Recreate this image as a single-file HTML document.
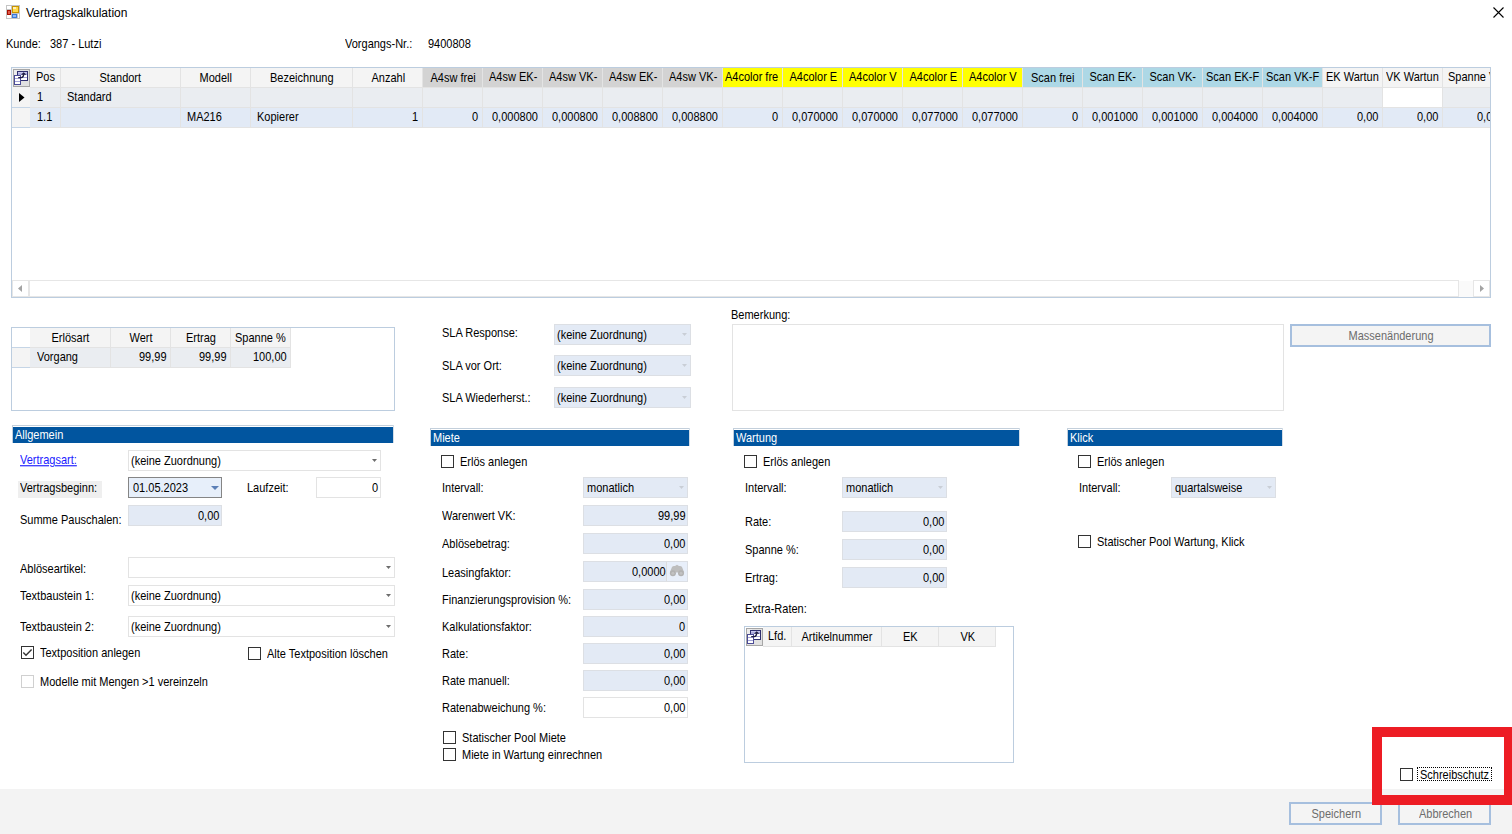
<!DOCTYPE html><html><head><meta charset="utf-8"><style>
html,body{margin:0;padding:0;width:1512px;height:834px;overflow:hidden;background:#fff;position:relative}
.b{position:absolute}
.t{position:absolute;font-family:"Liberation Sans", sans-serif;font-size:11px;line-height:13px;white-space:pre;color:#000;transform:scaleY(1.125);transform-origin:0 9.5px}
</style></head><body>
<svg class="b" style="left:6px;top:5px" width="14" height="14" viewBox="0 0 14 14" shape-rendering="crispEdges"><rect x="0" y="0" width="14" height="14" fill="#c4c4c4"/><rect x="1" y="1" width="4" height="3" fill="#fff"/><rect x="1" y="10" width="2" height="3" fill="#fff"/><rect x="3" y="10" width="2" height="3" fill="#fff"/><rect x="12" y="9" width="1" height="4" fill="#fff"/><rect x="1" y="5" width="4" height="5" fill="#a81000"/><rect x="2" y="6" width="2" height="3" fill="#e05848"/><rect x="6" y="1" width="7" height="7" fill="#c89400"/><rect x="7" y="2" width="5" height="5" fill="#ffd84a"/><rect x="7" y="2" width="3" height="2" fill="#fff0b8"/><rect x="6" y="9" width="5" height="4" fill="#3a78d8"/><rect x="7" y="10" width="3" height="2" fill="#90b8f8"/></svg>
<svg class="b" style="left:1492px;top:6px" width="13" height="13" viewBox="0 0 13 13"><path d="M1.5 1.5L11.5 11.5M11.5 1.5L1.5 11.5" stroke="#000" stroke-width="1.1"/></svg>
<div class="b" style="left:11px;top:67px;width:1480px;height:231px;background:#fff;box-sizing:border-box;border:1px solid #bccddf;"></div>
<div class="b" style="left:12px;top:68px;width:18px;height:20px;background:#f4f4f4;"></div>
<div class="b" style="left:12px;top:88px;width:18px;height:19px;background:#f4f4f4;"></div>
<div class="b" style="left:12px;top:107px;width:18px;height:1px;background:#c5d5e6;"></div>
<div class="b" style="left:12px;top:108px;width:18px;height:19px;background:#f4f4f4;"></div>
<div class="b" style="left:12px;top:127px;width:18px;height:1px;background:#c5d5e6;"></div>
<svg class="b" style="left:12px;top:68px" width="19" height="20" viewBox="0 0 19 20" shape-rendering="crispEdges"><rect x="1.5" y="1.5" width="16" height="17" fill="#e1e1e1" stroke="#a6a6a6"/><rect x="2" y="2" width="5" height="5" fill="#ececec"/><rect x="5.5" y="3.5" width="10" height="9" fill="#fff" stroke="#2e2e6e"/><rect x="6" y="4" width="9" height="3" fill="#ababdd"/><rect x="6" y="4" width="9" height="1" fill="#c8c8ee"/><rect x="6" y="9" width="9" height="1" fill="#a4a4d8"/><rect x="2.5" y="7.5" width="6" height="9" fill="#fff" stroke="#4b4b96"/><rect x="3" y="10" width="5" height="1" fill="#a4a4d8"/><rect x="3" y="13" width="5" height="1" fill="#a4a4d8"/></svg><svg class="b" style="left:12px;top:68px" width="19" height="20" viewBox="0 0 19 20"><path d="M6.2 9.6H9.3C10.9 9.6 11.5 8.8 11.7 6.3" stroke="#1c1c40" stroke-width="1.3" fill="none"/><path d="M9 6.8L11.7 4.2L14.4 6.8Z" fill="#1c1c40"/></svg>
<svg class="b" style="left:19px;top:93px" width="6" height="10" viewBox="0 0 6 10"><path d="M0 0L5.5 4.5L0 9Z" fill="#000"/></svg>
<div class="b" style="left:30px;top:68px;width:31px;height:19px;background:#f4f4f4;"></div>
<div class="b" style="left:30px;top:88px;width:31px;height:19px;background:#eaedf1;"></div>
<div class="b" style="left:30px;top:108px;width:31px;height:19px;background:#e2eaf6;"></div>
<div class="b" style="left:60px;top:68px;width:121px;height:19px;background:#f4f4f4;"></div>
<div class="b" style="left:60px;top:88px;width:121px;height:19px;background:#eaedf1;"></div>
<div class="b" style="left:60px;top:108px;width:121px;height:19px;background:#e2eaf6;"></div>
<div class="b" style="left:180px;top:68px;width:71px;height:19px;background:#f4f4f4;"></div>
<div class="b" style="left:180px;top:88px;width:71px;height:19px;background:#eaedf1;"></div>
<div class="b" style="left:180px;top:108px;width:71px;height:19px;background:#e2eaf6;"></div>
<div class="b" style="left:250px;top:68px;width:103px;height:19px;background:#f4f4f4;"></div>
<div class="b" style="left:250px;top:88px;width:103px;height:19px;background:#eaedf1;"></div>
<div class="b" style="left:250px;top:108px;width:103px;height:19px;background:#e2eaf6;"></div>
<div class="b" style="left:352px;top:68px;width:71px;height:19px;background:#f4f4f4;"></div>
<div class="b" style="left:352px;top:88px;width:71px;height:19px;background:#eaedf1;"></div>
<div class="b" style="left:352px;top:108px;width:71px;height:19px;background:#e2eaf6;"></div>
<div class="b" style="left:422px;top:68px;width:61px;height:19px;background:#d3d3d3;"></div>
<div class="b" style="left:422px;top:88px;width:61px;height:19px;background:#eaedf1;"></div>
<div class="b" style="left:422px;top:108px;width:61px;height:19px;background:#e2eaf6;"></div>
<div class="b" style="left:482px;top:68px;width:61px;height:19px;background:#d3d3d3;"></div>
<div class="b" style="left:482px;top:88px;width:61px;height:19px;background:#eaedf1;"></div>
<div class="b" style="left:482px;top:108px;width:61px;height:19px;background:#e2eaf6;"></div>
<div class="b" style="left:542px;top:68px;width:61px;height:19px;background:#d3d3d3;"></div>
<div class="b" style="left:542px;top:88px;width:61px;height:19px;background:#eaedf1;"></div>
<div class="b" style="left:542px;top:108px;width:61px;height:19px;background:#e2eaf6;"></div>
<div class="b" style="left:602px;top:68px;width:61px;height:19px;background:#d3d3d3;"></div>
<div class="b" style="left:602px;top:88px;width:61px;height:19px;background:#eaedf1;"></div>
<div class="b" style="left:602px;top:108px;width:61px;height:19px;background:#e2eaf6;"></div>
<div class="b" style="left:662px;top:68px;width:61px;height:19px;background:#d3d3d3;"></div>
<div class="b" style="left:662px;top:88px;width:61px;height:19px;background:#eaedf1;"></div>
<div class="b" style="left:662px;top:108px;width:61px;height:19px;background:#e2eaf6;"></div>
<div class="b" style="left:722px;top:68px;width:61px;height:19px;background:#ffff00;"></div>
<div class="b" style="left:722px;top:88px;width:61px;height:19px;background:#eaedf1;"></div>
<div class="b" style="left:722px;top:108px;width:61px;height:19px;background:#e2eaf6;"></div>
<div class="b" style="left:782px;top:68px;width:61px;height:19px;background:#ffff00;"></div>
<div class="b" style="left:782px;top:88px;width:61px;height:19px;background:#eaedf1;"></div>
<div class="b" style="left:782px;top:108px;width:61px;height:19px;background:#e2eaf6;"></div>
<div class="b" style="left:842px;top:68px;width:61px;height:19px;background:#ffff00;"></div>
<div class="b" style="left:842px;top:88px;width:61px;height:19px;background:#eaedf1;"></div>
<div class="b" style="left:842px;top:108px;width:61px;height:19px;background:#e2eaf6;"></div>
<div class="b" style="left:902px;top:68px;width:61px;height:19px;background:#ffff00;"></div>
<div class="b" style="left:902px;top:88px;width:61px;height:19px;background:#eaedf1;"></div>
<div class="b" style="left:902px;top:108px;width:61px;height:19px;background:#e2eaf6;"></div>
<div class="b" style="left:962px;top:68px;width:61px;height:19px;background:#ffff00;"></div>
<div class="b" style="left:962px;top:88px;width:61px;height:19px;background:#eaedf1;"></div>
<div class="b" style="left:962px;top:108px;width:61px;height:19px;background:#e2eaf6;"></div>
<div class="b" style="left:1022px;top:68px;width:61px;height:19px;background:#add8e6;"></div>
<div class="b" style="left:1022px;top:88px;width:61px;height:19px;background:#eaedf1;"></div>
<div class="b" style="left:1022px;top:108px;width:61px;height:19px;background:#e2eaf6;"></div>
<div class="b" style="left:1082px;top:68px;width:61px;height:19px;background:#add8e6;"></div>
<div class="b" style="left:1082px;top:88px;width:61px;height:19px;background:#eaedf1;"></div>
<div class="b" style="left:1082px;top:108px;width:61px;height:19px;background:#e2eaf6;"></div>
<div class="b" style="left:1142px;top:68px;width:61px;height:19px;background:#add8e6;"></div>
<div class="b" style="left:1142px;top:88px;width:61px;height:19px;background:#eaedf1;"></div>
<div class="b" style="left:1142px;top:108px;width:61px;height:19px;background:#e2eaf6;"></div>
<div class="b" style="left:1202px;top:68px;width:61px;height:19px;background:#add8e6;"></div>
<div class="b" style="left:1202px;top:88px;width:61px;height:19px;background:#eaedf1;"></div>
<div class="b" style="left:1202px;top:108px;width:61px;height:19px;background:#e2eaf6;"></div>
<div class="b" style="left:1262px;top:68px;width:61px;height:19px;background:#add8e6;"></div>
<div class="b" style="left:1262px;top:88px;width:61px;height:19px;background:#eaedf1;"></div>
<div class="b" style="left:1262px;top:108px;width:61px;height:19px;background:#e2eaf6;"></div>
<div class="b" style="left:1322px;top:68px;width:61px;height:19px;background:#f4f4f4;"></div>
<div class="b" style="left:1322px;top:88px;width:61px;height:19px;background:#eaedf1;"></div>
<div class="b" style="left:1322px;top:108px;width:61px;height:19px;background:#e2eaf6;"></div>
<div class="b" style="left:1382px;top:68px;width:61px;height:19px;background:#f4f4f4;"></div>
<div class="b" style="left:1382px;top:88px;width:61px;height:19px;background:#fff;"></div>
<div class="b" style="left:1382px;top:108px;width:61px;height:19px;background:#e2eaf6;"></div>
<div class="b" style="left:1442px;top:68px;width:48px;height:19px;background:#f4f4f4;"></div>
<div class="b" style="left:1442px;top:88px;width:48px;height:19px;background:#eaedf1;"></div>
<div class="b" style="left:1442px;top:108px;width:48px;height:19px;background:#e2eaf6;"></div>
<div class="b" style="left:30px;top:87px;width:1460px;height:1px;background:#e3e3e3;"></div>
<div class="b" style="left:30px;top:107px;width:1460px;height:1px;background:#e3e3e3;"></div>
<div class="b" style="left:30px;top:127px;width:1460px;height:1px;background:#e3e3e3;"></div>
<div class="b" style="left:60px;top:68px;width:1px;height:60px;background:#e3e3e3;"></div>
<div class="b" style="left:180px;top:68px;width:1px;height:60px;background:#e3e3e3;"></div>
<div class="b" style="left:250px;top:68px;width:1px;height:60px;background:#e3e3e3;"></div>
<div class="b" style="left:352px;top:68px;width:1px;height:60px;background:#e3e3e3;"></div>
<div class="b" style="left:422px;top:68px;width:1px;height:60px;background:#e3e3e3;"></div>
<div class="b" style="left:482px;top:68px;width:1px;height:60px;background:#e3e3e3;"></div>
<div class="b" style="left:542px;top:68px;width:1px;height:60px;background:#e3e3e3;"></div>
<div class="b" style="left:602px;top:68px;width:1px;height:60px;background:#e3e3e3;"></div>
<div class="b" style="left:662px;top:68px;width:1px;height:60px;background:#e3e3e3;"></div>
<div class="b" style="left:722px;top:68px;width:1px;height:60px;background:#e3e3e3;"></div>
<div class="b" style="left:782px;top:68px;width:1px;height:60px;background:#e3e3e3;"></div>
<div class="b" style="left:842px;top:68px;width:1px;height:60px;background:#e3e3e3;"></div>
<div class="b" style="left:902px;top:68px;width:1px;height:60px;background:#e3e3e3;"></div>
<div class="b" style="left:962px;top:68px;width:1px;height:60px;background:#e3e3e3;"></div>
<div class="b" style="left:1022px;top:68px;width:1px;height:60px;background:#e3e3e3;"></div>
<div class="b" style="left:1082px;top:68px;width:1px;height:60px;background:#e3e3e3;"></div>
<div class="b" style="left:1142px;top:68px;width:1px;height:60px;background:#e3e3e3;"></div>
<div class="b" style="left:1202px;top:68px;width:1px;height:60px;background:#e3e3e3;"></div>
<div class="b" style="left:1262px;top:68px;width:1px;height:60px;background:#e3e3e3;"></div>
<div class="b" style="left:1322px;top:68px;width:1px;height:60px;background:#e3e3e3;"></div>
<div class="b" style="left:1382px;top:68px;width:1px;height:60px;background:#e3e3e3;"></div>
<div class="b" style="left:1442px;top:68px;width:1px;height:60px;background:#e3e3e3;"></div>
<div class="b" style="left:12px;top:280px;width:1478px;height:17px;background:#fff;"></div>
<div class="b" style="left:12px;top:280px;width:17px;height:17px;box-sizing:border-box;border:1px solid #e6e6e6;"></div>
<svg class="b" style="left:17px;top:284px" width="7" height="10" viewBox="0 0 7 10"><path d="M5 1L1 4.5L5 8Z" fill="#a3a3a3"/></svg>
<div class="b" style="left:29px;top:280px;width:1430px;height:17px;box-sizing:border-box;border:1px solid #e6e6e6;"></div>
<div class="b" style="left:1459px;top:281px;width:14px;height:16px;background:#fafafa;"></div>
<div class="b" style="left:1473px;top:280px;width:17px;height:17px;box-sizing:border-box;border:1px solid #e6e6e6;"></div>
<svg class="b" style="left:1479px;top:284px" width="7" height="10" viewBox="0 0 7 10"><path d="M1 1L5 4.5L1 8Z" fill="#a3a3a3"/></svg>
<div class="b" style="left:11px;top:327px;width:384px;height:84px;background:#fff;box-sizing:border-box;border:1px solid #bccddf;"></div>
<div class="b" style="left:12px;top:348px;width:18px;height:19px;background:#f4f4f4;"></div>
<div class="b" style="left:12px;top:367px;width:18px;height:1px;background:#c5d5e6;"></div>
<div class="b" style="left:12px;top:347px;width:18px;height:1px;background:#c5d5e6;"></div>
<div class="b" style="left:30px;top:328px;width:81px;height:19px;background:#f4f4f4;"></div>
<div class="b" style="left:30px;top:348px;width:81px;height:19px;background:#eaedf1;"></div>
<div class="b" style="left:110px;top:328px;width:61px;height:19px;background:#f4f4f4;"></div>
<div class="b" style="left:110px;top:348px;width:61px;height:19px;background:#eaedf1;"></div>
<div class="b" style="left:170px;top:328px;width:61px;height:19px;background:#f4f4f4;"></div>
<div class="b" style="left:170px;top:348px;width:61px;height:19px;background:#eaedf1;"></div>
<div class="b" style="left:230px;top:328px;width:61px;height:19px;background:#f4f4f4;"></div>
<div class="b" style="left:230px;top:348px;width:61px;height:19px;background:#eaedf1;"></div>
<div class="b" style="left:30px;top:347px;width:261px;height:1px;background:#e3e3e3;"></div>
<div class="b" style="left:30px;top:367px;width:261px;height:1px;background:#e3e3e3;"></div>
<div class="b" style="left:110px;top:328px;width:1px;height:40px;background:#e3e3e3;"></div>
<div class="b" style="left:170px;top:328px;width:1px;height:40px;background:#e3e3e3;"></div>
<div class="b" style="left:230px;top:328px;width:1px;height:40px;background:#e3e3e3;"></div>
<div class="b" style="left:290px;top:328px;width:1px;height:40px;background:#e3e3e3;"></div>
<div class="b" style="left:12px;top:425px;width:382px;height:1px;background:#c3cfdb;"></div>
<div class="b" style="left:12px;top:425px;width:1px;height:18px;background:#c3cfdb;"></div>
<div class="b" style="left:393px;top:425px;width:1px;height:18px;background:#d3dde7;"></div>
<div class="b" style="left:13px;top:427px;width:380px;height:16px;background:#01559f;"></div>
<div class="b" style="left:430px;top:428px;width:260px;height:1px;background:#c3cfdb;"></div>
<div class="b" style="left:430px;top:428px;width:1px;height:18px;background:#c3cfdb;"></div>
<div class="b" style="left:689px;top:428px;width:1px;height:18px;background:#d3dde7;"></div>
<div class="b" style="left:431px;top:430px;width:258px;height:16px;background:#01559f;"></div>
<div class="b" style="left:733px;top:428px;width:287px;height:1px;background:#c3cfdb;"></div>
<div class="b" style="left:733px;top:428px;width:1px;height:18px;background:#c3cfdb;"></div>
<div class="b" style="left:1019px;top:428px;width:1px;height:18px;background:#d3dde7;"></div>
<div class="b" style="left:734px;top:430px;width:285px;height:16px;background:#01559f;"></div>
<div class="b" style="left:1067px;top:428px;width:216px;height:1px;background:#c3cfdb;"></div>
<div class="b" style="left:1067px;top:428px;width:1px;height:18px;background:#c3cfdb;"></div>
<div class="b" style="left:1282px;top:428px;width:1px;height:18px;background:#d3dde7;"></div>
<div class="b" style="left:1068px;top:430px;width:214px;height:16px;background:#01559f;"></div>
<div class="t" style="left:20px;top:454px;color:#1a1aff;text-decoration:underline">Vertragsart:</div>
<div class="b" style="left:128px;top:450px;width:253px;height:21px;background:#fff;box-sizing:border-box;border:1px solid #e3e3e3;"></div>
<svg class="b" style="left:372px;top:459px" width="5" height="3" viewBox="0 0 5 3"><path d="M0 0H5L2.5 3Z" fill="#6d6d6d"/></svg>
<div class="b" style="left:18px;top:481px;width:84px;height:17px;background:#efefef;"></div>
<div class="b" style="left:128px;top:477px;width:94px;height:21px;background:#e7effa;box-sizing:border-box;border:1px solid #858585;"></div>
<svg class="b" style="left:211px;top:486px" width="8" height="4" viewBox="0 0 8 4"><path d="M0 0H8L4 4Z" fill="#5b7fb6"/></svg>
<div class="b" style="left:316px;top:477px;width:65px;height:21px;background:#fff;box-sizing:border-box;border:1px solid #e3e3e3;"></div>
<div class="b" style="left:128px;top:505px;width:94px;height:21px;background:#e3eaf5;box-sizing:border-box;border:1px solid #dcdfe4;"></div>
<div class="b" style="left:128px;top:557px;width:267px;height:21px;background:#fff;box-sizing:border-box;border:1px solid #e3e3e3;"></div>
<svg class="b" style="left:386px;top:566px" width="5" height="3" viewBox="0 0 5 3"><path d="M0 0H5L2.5 3Z" fill="#6d6d6d"/></svg>
<div class="b" style="left:128px;top:585px;width:267px;height:21px;background:#fff;box-sizing:border-box;border:1px solid #e3e3e3;"></div>
<svg class="b" style="left:386px;top:594px" width="5" height="3" viewBox="0 0 5 3"><path d="M0 0H5L2.5 3Z" fill="#6d6d6d"/></svg>
<div class="b" style="left:128px;top:616px;width:267px;height:21px;background:#fff;box-sizing:border-box;border:1px solid #e3e3e3;"></div>
<svg class="b" style="left:386px;top:625px" width="5" height="3" viewBox="0 0 5 3"><path d="M0 0H5L2.5 3Z" fill="#6d6d6d"/></svg>
<div class="b" style="left:21px;top:646px;width:13px;height:13px;box-sizing:border-box;border:1px solid #333;background:#fff"></div>
<svg class="b" style="left:21px;top:646px" width="13" height="13" viewBox="0 0 13 13"><path d="M2.3 6.6L5 9.2L10.6 3.6" stroke="#333" stroke-width="1.45" fill="none"/></svg>
<div class="b" style="left:248px;top:647px;width:13px;height:13px;box-sizing:border-box;border:1px solid #333;background:#fff"></div>
<div class="b" style="left:21px;top:675px;width:13px;height:13px;box-sizing:border-box;border:1px solid #d0d0d0;background:#fff"></div>
<div class="b" style="left:554px;top:324px;width:137px;height:21px;background:#e3eaf5;box-sizing:border-box;border:1px solid #dcdfe4;"></div>
<svg class="b" style="left:682px;top:333px" width="5" height="3" viewBox="0 0 5 3"><path d="M0 0H5L2.5 3Z" fill="#c9ced6"/></svg>
<div class="b" style="left:554px;top:355px;width:137px;height:21px;background:#e3eaf5;box-sizing:border-box;border:1px solid #dcdfe4;"></div>
<svg class="b" style="left:682px;top:364px" width="5" height="3" viewBox="0 0 5 3"><path d="M0 0H5L2.5 3Z" fill="#c9ced6"/></svg>
<div class="b" style="left:554px;top:387px;width:137px;height:21px;background:#e3eaf5;box-sizing:border-box;border:1px solid #dcdfe4;"></div>
<svg class="b" style="left:682px;top:396px" width="5" height="3" viewBox="0 0 5 3"><path d="M0 0H5L2.5 3Z" fill="#c9ced6"/></svg>
<div class="b" style="left:732px;top:324px;width:552px;height:87px;background:#fff;box-sizing:border-box;border:1px solid #e3e3e3;"></div>
<div class="b" style="left:1290px;top:324px;width:201px;height:23px;box-sizing:border-box;border:2px solid #a6bfde;background:#f4f4f4"></div>
<div class="b" style="left:441px;top:455px;width:13px;height:13px;box-sizing:border-box;border:1px solid #333;background:#fff"></div>
<div class="b" style="left:583px;top:477px;width:105px;height:21px;background:#e3eaf5;box-sizing:border-box;border:1px solid #dcdfe4;"></div>
<svg class="b" style="left:679px;top:486px" width="5" height="3" viewBox="0 0 5 3"><path d="M0 0H5L2.5 3Z" fill="#c9ced6"/></svg>
<div class="b" style="left:583px;top:505px;width:105px;height:21px;background:#e3eaf5;box-sizing:border-box;border:1px solid #dcdfe4;"></div>
<div class="b" style="left:583px;top:533px;width:105px;height:21px;background:#e3eaf5;box-sizing:border-box;border:1px solid #dcdfe4;"></div>
<div class="b" style="left:583px;top:561px;width:105px;height:21px;background:#e3eaf5;box-sizing:border-box;border:1px solid #dcdfe4;"></div>
<div class="b" style="left:666px;top:562px;width:1px;height:19px;background:#dcdcdc;"></div>
<div class="b" style="left:583px;top:589px;width:105px;height:21px;background:#e3eaf5;box-sizing:border-box;border:1px solid #dcdfe4;"></div>
<div class="b" style="left:583px;top:616px;width:105px;height:21px;background:#e3eaf5;box-sizing:border-box;border:1px solid #dcdfe4;"></div>
<div class="b" style="left:583px;top:643px;width:105px;height:21px;background:#e3eaf5;box-sizing:border-box;border:1px solid #dcdfe4;"></div>
<div class="b" style="left:583px;top:670px;width:105px;height:21px;background:#e3eaf5;box-sizing:border-box;border:1px solid #dcdfe4;"></div>
<div class="b" style="left:583px;top:697px;width:105px;height:21px;background:#fff;box-sizing:border-box;border:1px solid #e3e3e3;"></div>
<div class="b" style="left:667px;top:562px;width:20px;height:19px;background:#e8effa;"></div>
<svg class="b" style="left:668px;top:563px" width="18" height="14" viewBox="0 0 18 14"><path d="M1.8 9.5L4 4Q5 2.5 7 3L9 1.8L11 3Q13 2.5 14 4L16.2 9.5Z" fill="#bdbdbd"/><circle cx="4.9" cy="10.2" r="3" fill="#b2b2b2"/><circle cx="13" cy="10.2" r="3" fill="#b2b2b2"/><circle cx="4.9" cy="10.2" r="1.5" fill="#c2c2c2"/><circle cx="13" cy="10.2" r="1.5" fill="#c2c2c2"/></svg>
<div class="b" style="left:443px;top:731px;width:13px;height:13px;box-sizing:border-box;border:1px solid #333;background:#fff"></div>
<div class="b" style="left:443px;top:748px;width:13px;height:13px;box-sizing:border-box;border:1px solid #333;background:#fff"></div>
<div class="b" style="left:744px;top:455px;width:13px;height:13px;box-sizing:border-box;border:1px solid #333;background:#fff"></div>
<div class="b" style="left:842px;top:477px;width:105px;height:21px;background:#e3eaf5;box-sizing:border-box;border:1px solid #dcdfe4;"></div>
<svg class="b" style="left:938px;top:486px" width="5" height="3" viewBox="0 0 5 3"><path d="M0 0H5L2.5 3Z" fill="#c9ced6"/></svg>
<div class="b" style="left:842px;top:511px;width:105px;height:21px;background:#e3eaf5;box-sizing:border-box;border:1px solid #dcdfe4;"></div>
<div class="b" style="left:842px;top:539px;width:105px;height:21px;background:#e3eaf5;box-sizing:border-box;border:1px solid #dcdfe4;"></div>
<div class="b" style="left:842px;top:567px;width:105px;height:21px;background:#e3eaf5;box-sizing:border-box;border:1px solid #dcdfe4;"></div>
<div class="b" style="left:744px;top:626px;width:270px;height:137px;background:#fff;box-sizing:border-box;border:1px solid #bccddf;"></div>
<svg class="b" style="left:745px;top:627px" width="19" height="20" viewBox="0 0 19 20" shape-rendering="crispEdges"><rect x="1.5" y="1.5" width="16" height="17" fill="#e1e1e1" stroke="#a6a6a6"/><rect x="2" y="2" width="5" height="5" fill="#ececec"/><rect x="5.5" y="3.5" width="10" height="9" fill="#fff" stroke="#2e2e6e"/><rect x="6" y="4" width="9" height="3" fill="#ababdd"/><rect x="6" y="4" width="9" height="1" fill="#c8c8ee"/><rect x="6" y="9" width="9" height="1" fill="#a4a4d8"/><rect x="2.5" y="7.5" width="6" height="9" fill="#fff" stroke="#4b4b96"/><rect x="3" y="10" width="5" height="1" fill="#a4a4d8"/><rect x="3" y="13" width="5" height="1" fill="#a4a4d8"/></svg><svg class="b" style="left:745px;top:627px" width="19" height="20" viewBox="0 0 19 20"><path d="M6.2 9.6H9.3C10.9 9.6 11.5 8.8 11.7 6.3" stroke="#1c1c40" stroke-width="1.3" fill="none"/><path d="M9 6.8L11.7 4.2L14.4 6.8Z" fill="#1c1c40"/></svg>
<div class="b" style="left:763px;top:627px;width:29px;height:19px;background:#f4f4f4;"></div>
<div class="b" style="left:791px;top:627px;width:91px;height:19px;background:#f4f4f4;"></div>
<div class="b" style="left:881px;top:627px;width:58px;height:19px;background:#f4f4f4;"></div>
<div class="b" style="left:938px;top:627px;width:58px;height:19px;background:#f4f4f4;"></div>
<div class="b" style="left:763px;top:646px;width:233px;height:1px;background:#e3e3e3;"></div>
<div class="b" style="left:791px;top:627px;width:1px;height:19px;background:#e3e3e3;"></div>
<div class="b" style="left:881px;top:627px;width:1px;height:19px;background:#e3e3e3;"></div>
<div class="b" style="left:938px;top:627px;width:1px;height:19px;background:#e3e3e3;"></div>
<div class="b" style="left:995px;top:627px;width:1px;height:19px;background:#e3e3e3;"></div>
<div class="b" style="left:1078px;top:455px;width:13px;height:13px;box-sizing:border-box;border:1px solid #333;background:#fff"></div>
<div class="b" style="left:1171px;top:477px;width:105px;height:21px;background:#e3eaf5;box-sizing:border-box;border:1px solid #dcdfe4;"></div>
<svg class="b" style="left:1267px;top:486px" width="5" height="3" viewBox="0 0 5 3"><path d="M0 0H5L2.5 3Z" fill="#c9ced6"/></svg>
<div class="b" style="left:1078px;top:535px;width:13px;height:13px;box-sizing:border-box;border:1px solid #333;background:#fff"></div>
<div class="b" style="left:0px;top:789px;width:1512px;height:45px;background:#f3f3f3;"></div>
<div class="b" style="left:1289px;top:802px;width:93px;height:23px;box-sizing:border-box;border:2px solid #a6bfde;background:#f4f4f4"></div>
<div class="b" style="left:1398px;top:802px;width:93px;height:23px;box-sizing:border-box;border:2px solid #a6bfde;background:#f4f4f4"></div>
<div class="b" style="left:1400px;top:768px;width:13px;height:13px;box-sizing:border-box;border:1px solid #333;background:#fff"></div>
<div class="b" style="left:1417px;top:767px;width:75px;height:14px;box-sizing:border-box;border:1px dotted #000"></div>
<div class="b" style="left:1372px;top:727px;width:140px;height:78px;box-sizing:border-box;border:10px solid #ed1c24;border-right:8px solid #ed1c24"></div>
<div class="t" style="left:26.00px;top:7px;color:#000;font-size:12px;transform:none;">Vertragskalkulation</div>
<div class="t" style="left:6.00px;top:38px;color:#000;">Kunde:</div>
<div class="t" style="left:50.00px;top:38px;color:#000;">387 - Lutzi</div>
<div class="t" style="left:345.00px;top:38px;color:#000;">Vorgangs-Nr.:</div>
<div class="t" style="left:428.00px;top:38px;color:#000;">9400808</div>
<div class="t" style="left:36.00px;top:71px;color:#000;">Pos</div>
<div class="t" style="left:99.50px;top:72px;color:#000;">Standort</div>
<div class="t" style="left:199.50px;top:72px;color:#000;">Modell</div>
<div class="t" style="left:270.00px;top:72px;color:#000;">Bezeichnung</div>
<div class="t" style="left:371.50px;top:72px;color:#000;">Anzahl</div>
<div class="t" style="left:430.50px;top:72px;color:#000;">A4sw frei</div>
<div class="t" style="left:489.00px;top:71px;color:#000;">A4sw EK-</div>
<div class="t" style="left:549.00px;top:71px;color:#000;">A4sw VK-</div>
<div class="t" style="left:609.00px;top:71px;color:#000;">A4sw EK-</div>
<div class="t" style="left:669.00px;top:71px;color:#000;">A4sw VK-</div>
<div class="t" style="left:725.00px;top:71px;color:#000;">A4color fre</div>
<div class="t" style="left:789.50px;top:71px;color:#000;">A4color E</div>
<div class="t" style="left:849.00px;top:71px;color:#000;">A4color V</div>
<div class="t" style="left:909.50px;top:71px;color:#000;">A4color E</div>
<div class="t" style="left:969.00px;top:71px;color:#000;">A4color V</div>
<div class="t" style="left:1031.00px;top:72px;color:#000;">Scan frei</div>
<div class="t" style="left:1089.50px;top:71px;color:#000;">Scan EK-</div>
<div class="t" style="left:1149.50px;top:71px;color:#000;">Scan VK-</div>
<div class="t" style="left:1206.00px;top:71px;color:#000;">Scan EK-F</div>
<div class="t" style="left:1266.00px;top:71px;color:#000;">Scan VK-F</div>
<div class="t" style="left:1326.00px;top:71px;color:#000;">EK Wartun</div>
<div class="t" style="left:1386.00px;top:71px;color:#000;">VK Wartun</div>
<div class="b" style="left:1442px;top:69px;width:48px;height:18px;overflow:hidden"><div class="t" style="left:6.00px;top:2px;color:#000;">Spanne V</div></div>
<div class="t" style="left:37.00px;top:91px;color:#000;">1</div>
<div class="t" style="left:67.00px;top:91px;color:#000;">Standard</div>
<div class="t" style="left:37.00px;top:111px;color:#000;">1.1</div>
<div class="t" style="left:187.00px;top:111px;color:#000;">MA216</div>
<div class="t" style="left:257.00px;top:111px;color:#000;">Kopierer</div>
<div class="t" style="left:412.00px;top:111px;color:#000;">1</div>
<div class="t" style="left:472.00px;top:111px;color:#000;">0</div>
<div class="t" style="left:492.00px;top:111px;color:#000;">0,000800</div>
<div class="t" style="left:552.00px;top:111px;color:#000;">0,000800</div>
<div class="t" style="left:612.00px;top:111px;color:#000;">0,008800</div>
<div class="t" style="left:672.00px;top:111px;color:#000;">0,008800</div>
<div class="t" style="left:772.00px;top:111px;color:#000;">0</div>
<div class="t" style="left:792.00px;top:111px;color:#000;">0,070000</div>
<div class="t" style="left:852.00px;top:111px;color:#000;">0,070000</div>
<div class="t" style="left:912.00px;top:111px;color:#000;">0,077000</div>
<div class="t" style="left:972.00px;top:111px;color:#000;">0,077000</div>
<div class="t" style="left:1072.00px;top:111px;color:#000;">0</div>
<div class="t" style="left:1092.00px;top:111px;color:#000;">0,001000</div>
<div class="t" style="left:1152.00px;top:111px;color:#000;">0,001000</div>
<div class="t" style="left:1212.00px;top:111px;color:#000;">0,004000</div>
<div class="t" style="left:1272.00px;top:111px;color:#000;">0,004000</div>
<div class="t" style="left:1357.00px;top:111px;color:#000;">0,00</div>
<div class="t" style="left:1417.00px;top:111px;color:#000;">0,00</div>
<div class="b" style="left:1442px;top:109px;width:48px;height:18px;overflow:hidden"><div class="t" style="left:35.00px;top:2px;color:#000;">0,00</div></div>
<div class="t" style="left:51.50px;top:332px;color:#000;">Erlösart</div>
<div class="t" style="left:129.50px;top:332px;color:#000;">Wert</div>
<div class="t" style="left:186.00px;top:332px;color:#000;">Ertrag</div>
<div class="t" style="left:235.00px;top:332px;color:#000;">Spanne %</div>
<div class="t" style="left:37.00px;top:351px;color:#000;">Vorgang</div>
<div class="t" style="left:139.00px;top:351px;color:#000;">99,99</div>
<div class="t" style="left:199.00px;top:351px;color:#000;">99,99</div>
<div class="t" style="left:253.00px;top:351px;color:#000;">100,00</div>
<div class="t" style="left:15.00px;top:429px;color:#fff;">Allgemein</div>
<div class="t" style="left:433.00px;top:432px;color:#fff;">Miete</div>
<div class="t" style="left:736.00px;top:432px;color:#fff;">Wartung</div>
<div class="t" style="left:1070.00px;top:432px;color:#fff;">Klick</div>
<div class="t" style="left:131.00px;top:455px;color:#000;">(keine Zuordnung)</div>
<div class="t" style="left:20.00px;top:482px;color:#000;">Vertragsbeginn:</div>
<div class="t" style="left:133.00px;top:482px;color:#000;">01.05.2023</div>
<div class="t" style="left:247.00px;top:482px;color:#000;">Laufzeit:</div>
<div class="t" style="left:372.00px;top:482px;color:#000;">0</div>
<div class="t" style="left:20.00px;top:514px;color:#000;">Summe Pauschalen:</div>
<div class="t" style="left:198.00px;top:510px;color:#000;">0,00</div>
<div class="t" style="left:20.00px;top:563px;color:#000;">Ablöseartikel:</div>
<div class="t" style="left:20.00px;top:590px;color:#000;">Textbaustein 1:</div>
<div class="t" style="left:131.00px;top:590px;color:#000;">(keine Zuordnung)</div>
<div class="t" style="left:20.00px;top:621px;color:#000;">Textbaustein 2:</div>
<div class="t" style="left:131.00px;top:621px;color:#000;">(keine Zuordnung)</div>
<div class="t" style="left:40.00px;top:647px;color:#000;">Textposition anlegen</div>
<div class="t" style="left:267.00px;top:648px;color:#000;">Alte Textposition löschen</div>
<div class="t" style="left:40.00px;top:676px;color:#000;">Modelle mit Mengen >1 vereinzeln</div>
<div class="t" style="left:442.00px;top:327px;color:#000;">SLA Response:</div>
<div class="t" style="left:557.00px;top:329px;color:#000;">(keine Zuordnung)</div>
<div class="t" style="left:442.00px;top:360px;color:#000;">SLA vor Ort:</div>
<div class="t" style="left:557.00px;top:360px;color:#000;">(keine Zuordnung)</div>
<div class="t" style="left:442.00px;top:392px;color:#000;">SLA Wiederherst.:</div>
<div class="t" style="left:557.00px;top:392px;color:#000;">(keine Zuordnung)</div>
<div class="t" style="left:731.00px;top:309px;color:#000;">Bemerkung:</div>
<div class="t" style="left:1348.50px;top:330px;color:#6d6d6d;">Massenänderung</div>
<div class="t" style="left:460.00px;top:456px;color:#000;">Erlös anlegen</div>
<div class="t" style="left:442.00px;top:482px;color:#000;">Intervall:</div>
<div class="t" style="left:587.00px;top:482px;color:#000;">monatlich</div>
<div class="t" style="left:442.00px;top:510px;color:#000;">Warenwert VK:</div>
<div class="t" style="left:658.00px;top:510px;color:#000;">99,99</div>
<div class="t" style="left:442.00px;top:538px;color:#000;">Ablösebetrag:</div>
<div class="t" style="left:664.00px;top:538px;color:#000;">0,00</div>
<div class="t" style="left:442.00px;top:567px;color:#000;">Leasingfaktor:</div>
<div class="t" style="left:632.00px;top:566px;color:#000;">0,0000</div>
<div class="t" style="left:442.00px;top:594px;color:#000;">Finanzierungsprovision %:</div>
<div class="t" style="left:664.00px;top:594px;color:#000;">0,00</div>
<div class="t" style="left:442.00px;top:621px;color:#000;">Kalkulationsfaktor:</div>
<div class="t" style="left:679.00px;top:621px;color:#000;">0</div>
<div class="t" style="left:442.00px;top:648px;color:#000;">Rate:</div>
<div class="t" style="left:664.00px;top:648px;color:#000;">0,00</div>
<div class="t" style="left:442.00px;top:675px;color:#000;">Rate manuell:</div>
<div class="t" style="left:664.00px;top:675px;color:#000;">0,00</div>
<div class="t" style="left:442.00px;top:702px;color:#000;">Ratenabweichung %:</div>
<div class="t" style="left:664.00px;top:702px;color:#000;">0,00</div>
<div class="t" style="left:462.00px;top:732px;color:#000;">Statischer Pool Miete</div>
<div class="t" style="left:462.00px;top:749px;color:#000;">Miete in Wartung einrechnen</div>
<div class="t" style="left:763.00px;top:456px;color:#000;">Erlös anlegen</div>
<div class="t" style="left:745.00px;top:482px;color:#000;">Intervall:</div>
<div class="t" style="left:846.00px;top:482px;color:#000;">monatlich</div>
<div class="t" style="left:745.00px;top:516px;color:#000;">Rate:</div>
<div class="t" style="left:923.00px;top:516px;color:#000;">0,00</div>
<div class="t" style="left:745.00px;top:544px;color:#000;">Spanne %:</div>
<div class="t" style="left:923.00px;top:544px;color:#000;">0,00</div>
<div class="t" style="left:745.00px;top:572px;color:#000;">Ertrag:</div>
<div class="t" style="left:923.00px;top:572px;color:#000;">0,00</div>
<div class="t" style="left:745.00px;top:603px;color:#000;">Extra-Raten:</div>
<div class="t" style="left:768.00px;top:630px;color:#000;">Lfd.</div>
<div class="t" style="left:801.50px;top:631px;color:#000;">Artikelnummer</div>
<div class="t" style="left:903.00px;top:631px;color:#000;">EK</div>
<div class="t" style="left:960.50px;top:631px;color:#000;">VK</div>
<div class="t" style="left:1097.00px;top:456px;color:#000;">Erlös anlegen</div>
<div class="t" style="left:1079.00px;top:482px;color:#000;">Intervall:</div>
<div class="t" style="left:1175.00px;top:482px;color:#000;">quartalsweise</div>
<div class="t" style="left:1097.00px;top:536px;color:#000;">Statischer Pool Wartung, Klick</div>
<div class="t" style="left:1311.50px;top:808px;color:#6d6d6d;">Speichern</div>
<div class="t" style="left:1419.00px;top:808px;color:#6d6d6d;">Abbrechen</div>
<div class="t" style="left:1420.00px;top:769px;color:#000;">Schreibschutz</div>
</body></html>
